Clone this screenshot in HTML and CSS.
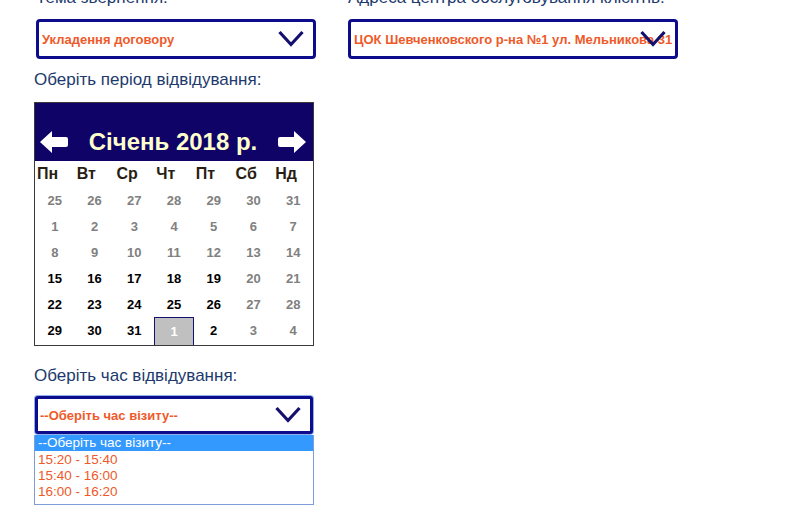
FILE: index.html
```html
<!DOCTYPE html>
<html lang="uk">
<head>
<meta charset="utf-8">
<link rel="stylesheet" href="styles.css">
</head>
<body>
<div class="page">
  <div class="top-row">
    <div class="field field-theme">
      <div class="label">Тема звернення:</div>
      <div class="select">
        <span class="select-text">Укладення договору</span>
        <svg class="chev" viewBox="0 0 26 17" width="26" height="17"><polyline points="1.5,2 13,14.5 24.5,2" fill="none" stroke="#14106e" stroke-width="3.2"/></svg>
      </div>
    </div>
    <div class="field field-addr">
      <div class="label">Адреса центра обслуговування клієнтів:</div>
      <div class="select">
        <span class="select-text">ЦОК Шевченковского р-на №1 ул. Мельникова 31</span>
        <svg class="chev" viewBox="0 0 26 17" width="26" height="17"><polyline points="1.5,2 13,14.5 24.5,2" fill="none" stroke="#14106e" stroke-width="3.2"/></svg>
      </div>
    </div>
  </div>

  <div class="label label-period">Оберіть період відвідування:</div>

  <div class="calendar">
    <div class="cal-head">
      <svg class="arrow" viewBox="0 0 28 22" width="28" height="22"><path d="M0,11 L12,0 L12,6 L26,6 Q28,6 28,8 L28,14 Q28,16 26,16 L12,16 L12,22 Z" fill="#fff"/></svg>
      <span class="cal-title">Січень 2018 р.</span>
      <svg class="arrow" viewBox="0 0 28 22" width="28" height="22"><path d="M28,11 L16,0 L16,6 L2,6 Q0,6 0,8 L0,14 Q0,16 2,16 L16,16 L16,22 Z" fill="#fff"/></svg>
    </div>
    <div class="cal-grid">
      <div class="dn">Пн</div><div class="dn">Вт</div><div class="dn">Ср</div><div class="dn">Чт</div><div class="dn">Пт</div><div class="dn">Сб</div><div class="dn">Нд</div>
      <div class="d off">25</div><div class="d off">26</div><div class="d off">27</div><div class="d off">28</div><div class="d off">29</div><div class="d off">30</div><div class="d off">31</div>
      <div class="d off">1</div><div class="d off">2</div><div class="d off">3</div><div class="d off">4</div><div class="d off">5</div><div class="d off">6</div><div class="d off">7</div>
      <div class="d off">8</div><div class="d off">9</div><div class="d off">10</div><div class="d off">11</div><div class="d off">12</div><div class="d off">13</div><div class="d off">14</div>
      <div class="d">15</div><div class="d">16</div><div class="d">17</div><div class="d">18</div><div class="d">19</div><div class="d off">20</div><div class="d off">21</div>
      <div class="d">22</div><div class="d">23</div><div class="d">24</div><div class="d">25</div><div class="d">26</div><div class="d off">27</div><div class="d off">28</div>
      <div class="d">29</div><div class="d">30</div><div class="d">31</div><div class="d sel">1</div><div class="d">2</div><div class="d off">3</div><div class="d off">4</div>
    </div>
  </div>

  <div class="label label-time">Оберіть час відвідування:</div>

  <div class="time-field">
    <div class="select select-focus">
      <span class="select-text">--Оберіть час візиту--</span>
      <svg class="chev" viewBox="0 0 26 17" width="26" height="17"><polyline points="1.5,2 13,14.5 24.5,2" fill="none" stroke="#14106e" stroke-width="3.2"/></svg>
    </div>
    <div class="dropdown">
      <div class="opt opt-active">--Оберіть час візиту--</div>
      <div class="opt">15:20 - 15:40</div>
      <div class="opt">15:40 - 16:00</div>
      <div class="opt">16:00 - 16:20</div>
    </div>
  </div>
</div>
</body>
</html>
```

FILE: styles.css
```css
html, body {
  margin: 0;
  padding: 0;
  background: #fff;
}
body {
  font-family: "Liberation Sans", Arial, sans-serif;
  width: 798px;
  height: 523px;
  overflow: hidden;
}
.page {
  margin-top: -11px;
  padding-left: 34px;
}
.top-row {
  display: flex;
  gap: 32px;
}
.field-theme {
  width: 280px;
  padding-left: 2px;
}
.field-addr {
  width: 330px;
}
.label {
  font-size: 17px;
  line-height: 18px;
  color: #1d3a6d;
}
.field .label {
  margin-bottom: 12px;
}
.select {
  position: relative;
  box-sizing: border-box;
  height: 40px;
  border: 3px solid #0c0c8c;
  border-radius: 4px;
  background: #fff;
  display: flex;
  align-items: center;
  padding-left: 3px;
  overflow: hidden;
}
.select-text {
  font-size: 13px;
  font-weight: bold;
  color: #ee5a2a;
  white-space: nowrap;
}
.chev {
  position: absolute;
  right: 9px;
  top: 8px;
}
.label-period {
  margin-top: 12px;
}
.calendar {
  margin-top: 13px;
  width: 280px;
  box-sizing: border-box;
  border: 1px solid #3a3a3a;
  padding-bottom: 2px;
}
.cal-head {
  height: 58px;
  background: #0f0368;
  display: flex;
  align-items: flex-end;
  justify-content: space-between;
  padding: 0 7px 8px 5px;
  box-sizing: border-box;
}
.cal-title {
  font-size: 24px;
  font-weight: bold;
  color: #ffffcc;
  line-height: 28px;
  margin-bottom: -3px;
}
.cal-grid {
  display: grid;
  grid-template-columns: repeat(7, 1fr);
  grid-auto-rows: 26px;
}
.dn {
  font-size: 16px;
  font-weight: bold;
  color: #2a1e14;
  display: flex;
  align-items: center;
  justify-content: flex-start;
  padding-left: 2px;
}
.d {
  font-size: 13px;
  font-weight: bold;
  color: #000;
  display: flex;
  align-items: center;
  justify-content: center;
}
.d.off {
  color: #808080;
}
.d.sel {
  background: #c0c0c0;
  color: #fff;
  border: 1px solid #14106e;
  border-bottom: none;
  box-sizing: border-box;
  height: 28px;
}
.label-time {
  margin-top: 21px;
}
.time-field {
  margin-top: 11px;
  width: 280px;
}
.select-focus {
  border-radius: 3px;
  box-shadow: 0 0 0 1px #8fb0ea;
  width: 278px;
  margin-left: 1px;
  height: 38px;
  padding-left: 2px;
}
.select-focus .chev {
  top: 7px;
}
.dropdown {
  border: 1px solid #7f9ddb;
  border-top: none;
  padding-bottom: 4px;
  margin-top: 1px;
}
.opt {
  font-size: 13.5px;
  line-height: 16px;
  height: 16px;
  padding-left: 3px;
  color: #ee5a2a;
}
.opt-active {
  background: #3399ff;
  color: #fff;
  margin-bottom: 1px;
}
```
